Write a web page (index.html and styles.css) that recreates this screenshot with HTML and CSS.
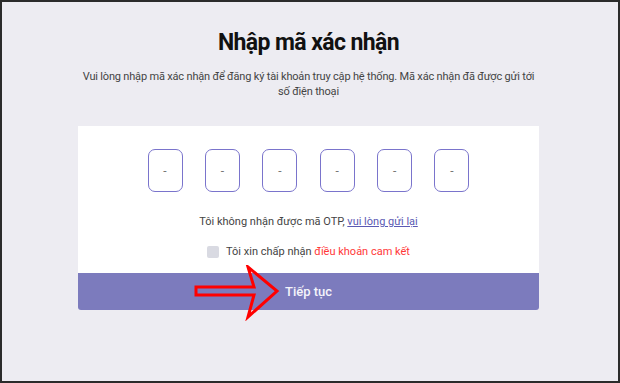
FILE: index.html
```html
<!DOCTYPE html>
<html lang="vi">
<head>
  <meta charset="UTF-8">
  <meta name="viewport" content="width=device-width, initial-scale=1.0">
  <title>Nhập mã xác nhận</title>
  <link rel="stylesheet" href="styles.css">
</head>
<body>
  <div class="frame">
    <div class="container">
      <h1>Nhập mã xác nhận</h1>
      <p class="subtitle">Vui lòng nhập mã xác nhận để đăng ký tài khoản truy cập hệ thống. Mã xác nhận đã được gửi tới số điện thoại</p>

      <div class="card">
        <div class="otp">
          <div class="otp-box">-</div>
          <div class="otp-box">-</div>
          <div class="otp-box">-</div>
          <div class="otp-box">-</div>
          <div class="otp-box">-</div>
          <div class="otp-box">-</div>
        </div>
        <p class="resend">Tôi không nhận được mã OTP, <a href="#">vui lòng gửi lại</a></p>
        <label class="agree">
          <span class="checkbox"></span>
          <span>Tôi xin chấp nhận <span class="terms">điều khoản cam kết</span></span>
        </label>
      </div>

      <div class="submit-wrap">
        <button class="btn">Tiếp tục</button>
        <!-- red annotation arrow drawn over the button -->
        <svg class="arrow" width="90" height="56" viewBox="0 0 90 56" fill="none" stroke="#f00" stroke-width="3" stroke-linejoin="miter">
          <path d="M2 22 H60 L54 2 L83 26 L54 52 L60 30 H2 Z"></path>
        </svg>
      </div>
    </div>
  </div>
</body>
</html>
```

FILE: styles.css
```css
:root {
  --primary-color: #7c7bbd;
  --border-color: #7a74cc;
  --text-color: #444;
  --background-color: #edecf2;
}

* {
  box-sizing: border-box;
}

body {
  margin: 0;
  font-family: Roboto, 'Liberation Sans', sans-serif;
  color: var(--text-color);
}

.frame {
  width: 620px;
  height: 383px;
  border: 2px solid #2b2b2b;
  padding-right: 3px;
  background-color: var(--background-color);
}

.container {
  width: 461px;
  margin: 0 auto;
  padding-top: 27px;
  text-align: center;
}

h1 {
  margin: 0;
  font-size: 23px;
  line-height: 28px;
  font-weight: 700;
  letter-spacing: -0.6px;
  color: #111;
}

.subtitle {
  margin: 12px 0 0;
  font-size: 11px;
  line-height: 15px;
  letter-spacing: -0.18px;
}

.card {
  margin-top: 27px;
  background: #fff;
  padding: 23px 0 14px;
}

.otp {
  display: flex;
  justify-content: center;
  gap: 22.4px;
}

.otp-box {
  width: 35px;
  height: 43px;
  border: 1px solid var(--border-color);
  border-radius: 7px;
  display: flex;
  align-items: center;
  justify-content: center;
  font-size: 12px;
  color: #777;
}

.resend {
  margin: 23px 0 0;
  font-size: 11px;
  line-height: 14px;
}

.resend a {
  color: #5b59b3;
}

.agree {
  margin-top: 16px;
  display: flex;
  justify-content: center;
  align-items: center;
  gap: 7px;
  font-size: 11px;
  line-height: 14px;
}

.checkbox {
  width: 12px;
  height: 12px;
  border-radius: 2px;
  background: #d9dae2;
}

.terms {
  color: #ff3838;
}

.submit-wrap {
  position: relative;
}

.btn {
  display: block;
  width: 100%;
  height: 37px;
  border: none;
  border-radius: 0 0 3px 3px;
  background-color: var(--primary-color);
  color: #f4f4fa;
  font-family: inherit;
  font-size: 13px;
  font-weight: 500;
}

.arrow {
  position: absolute;
  left: 116px;
  top: -8px;
}
```
